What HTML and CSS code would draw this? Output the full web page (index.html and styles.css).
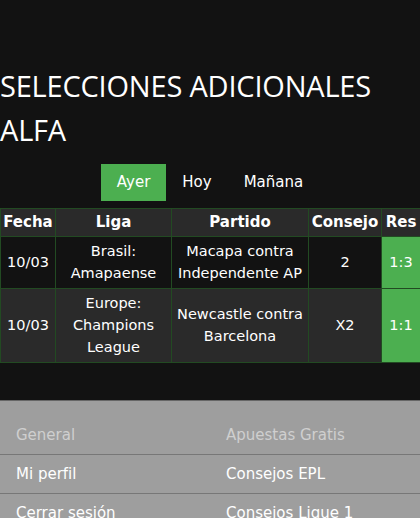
FILE: index.html
```html
<!DOCTYPE html>
<html lang="es">
<head>
<meta charset="utf-8">
<title>Selecciones adicionales alfa</title>
<link rel="stylesheet" href="styles.css">
</head>
<body>
<main class="page">
  <h1 class="title">SELECCIONES ADICIONALES ALFA</h1>
  <nav class="tabs">
    <a class="tab active">Ayer</a>
    <a class="tab">Hoy</a>
    <a class="tab">Mañana</a>
  </nav>
  <table class="tips">
    <colgroup>
      <col class="c-date"><col class="c-league"><col class="c-match"><col class="c-tip"><col class="c-res">
    </colgroup>
    <thead>
      <tr><th>Fecha</th><th>Liga</th><th>Partido</th><th>Consejo</th><th>Res</th></tr>
    </thead>
    <tbody>
      <tr class="odd">
        <td>10/03</td><td>Brasil: Amapaense</td><td>Macapa contra Independente AP</td><td>2</td><td class="res">1:3</td>
      </tr>
      <tr class="even">
        <td>10/03</td><td>Europe: Champions League</td><td>Newcastle contra Barcelona</td><td>X2</td><td class="res">1:1</td>
      </tr>
    </tbody>
  </table>
</main>
<footer class="footer">
  <div class="frow head"><span>General</span><span>Apuestas Gratis</span></div>
  <div class="frow"><span>Mi perfil</span><span>Consejos EPL</span></div>
  <div class="frow"><span>Cerrar sesión</span><span>Consejos Ligue 1</span></div>
</footer>
</body>
</html>
```
FILE: styles.css
```css
html, body {
  margin: 0;
  padding: 0;
  background: #121212;
  color: #fff;
  font-family: "DejaVu Sans", Verdana, sans-serif;
}
.page {
  padding-top: 64px;
  padding-bottom: 37px;
}
.title {
  margin: 0;
  font-family: "Open Sans", "Noto Sans", sans-serif;
  font-weight: 400;
  font-size: 29px;
  line-height: 44px;
  letter-spacing: -0.2px;
  width: 400px;
}
.tabs {
  display: flex;
  justify-content: center;
  margin-top: 12px;
  margin-bottom: 7px;
}
.tab {
  font-size: 15px;
  line-height: 21px;
  padding: 8px 16px;
  color: #fff;
}
.tab.active {
  background: #4caf50;
}
.tips {
  width: 420px;
  border-collapse: collapse;
  table-layout: fixed;
  font-size: 14.5px;
}
.c-date { width: 55px; }
.c-league { width: 116px; }
.c-match { width: 137px; }
.c-tip { width: 73px; }
.c-res { width: 39px; }
.tips th, .tips td {
  border: 1px solid #224a22;
  text-align: center;
  line-height: 22px;
  padding: 3px 0 4px;
  overflow: hidden;
}
.tips th {
  background: #2a2a2a;
  font-weight: 700;
  font-size: 15px;
  padding: 2px 0 3px;
  white-space: nowrap;
}
.tips tr.odd td { background: #121212; }
.tips tr.even td { background: #2a2a2a; }
.tips td.res, .tips tr.odd td.res, .tips tr.even td.res {
  background: #4caf50;
}
.footer {
  background: #9e9e9e;
  border-top: 1px solid #666;
  padding-top: 15px;
  font-size: 15px;
}
.frow {
  display: grid;
  grid-template-columns: 210px 210px;
  height: 38px;
  align-items: center;
  border-bottom: 1px solid #777;
}
.frow span {
  padding-left: 16px;
}
.frow.head {
  color: #cfcfcf;
}
```
